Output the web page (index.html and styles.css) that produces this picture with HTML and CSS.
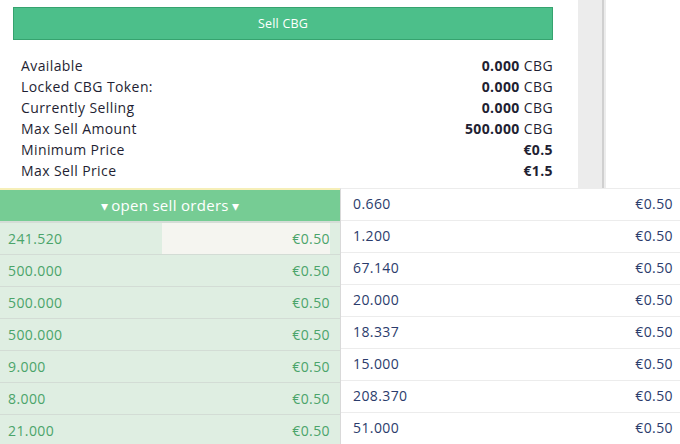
FILE: index.html
```html
<!DOCTYPE html>
<html>
<head>
<meta charset="utf-8">
<link rel="stylesheet" href="styles.css">
</head>
<body>
<div class="top">
  <div class="card">
    <div class="btn">Sell CBG</div>
    <div class="info">
      <div class="irow"><span>Available</span><span><b>0.000</b> CBG</span></div>
      <div class="irow"><span>Locked CBG Token:</span><span><b>0.000</b> CBG</span></div>
      <div class="irow"><span>Currently Selling</span><span><b>0.000</b> CBG</span></div>
      <div class="irow"><span>Max Sell Amount</span><span><b>500.000</b> CBG</span></div>
      <div class="irow"><span>Minimum Price</span><span><b>€0.5</b></span></div>
      <div class="irow"><span>Max Sell Price</span><span><b>€1.5</b></span></div>
    </div>
  </div>
  <div class="scroll"></div>
  <div class="rest"></div>
</div>
<div class="bottom">
  <div class="left">
    <div class="head"><span class="caret">▾</span> open sell orders <span class="caret">▾</span></div>
    <div class="lrow mine"><div class="bar" style="width:168px"></div><span class="amt">241.520</span><span class="pr">€0.50</span></div>
    <div class="lrow"><span class="amt">500.000</span><span class="pr">€0.50</span></div>
    <div class="lrow"><span class="amt">500.000</span><span class="pr">€0.50</span></div>
    <div class="lrow"><span class="amt">500.000</span><span class="pr">€0.50</span></div>
    <div class="lrow"><span class="amt">9.000</span><span class="pr">€0.50</span></div>
    <div class="lrow"><span class="amt">8.000</span><span class="pr">€0.50</span></div>
    <div class="lrow"><span class="amt">21.000</span><span class="pr">€0.50</span></div>
  </div>
  <div class="right">
    <div class="rrow"><span>0.660</span><span>€0.50</span></div>
    <div class="rrow"><span>1.200</span><span>€0.50</span></div>
    <div class="rrow"><span>67.140</span><span>€0.50</span></div>
    <div class="rrow"><span>20.000</span><span>€0.50</span></div>
    <div class="rrow"><span>18.337</span><span>€0.50</span></div>
    <div class="rrow"><span>15.000</span><span>€0.50</span></div>
    <div class="rrow"><span>208.370</span><span>€0.50</span></div>
    <div class="rrow"><span>51.000</span><span>€0.50</span></div>
  </div>
</div>
</body>
</html>
```
FILE: styles.css
```css
html, body {
  margin: 0;
  padding: 0;
  background: #fff;
  overflow: hidden;
}
body {
  font-family: "Open Sans", "Noto Sans", sans-serif;
  font-size: 13px;
  color: #1f1f33;
  width: 680px;
  height: 444px;
}
.top {
  display: flex;
  height: 188px;
}
.card {
  width: 540px;
  padding: 7px 25px 0 13px;
}
.btn {
  height: 31px;
  background: #4cbf8a;
  border: 1px solid #36a36f;
  color: #fff;
  display: flex;
  align-items: center;
  justify-content: center;
  font-size: 12.5px;
  letter-spacing: 0.2px;
}
.info {
  margin-top: 15px;
  padding-left: 8px;
}
.irow {
  display: flex;
  justify-content: space-between;
  height: 21px;
  line-height: 21px;
  font-size: 14px;
  letter-spacing: 0.4px;
}
.irow b {
  font-weight: 700;
}
.scroll {
  width: 24px;
  background: #ececec;
  border-right: 2px solid #d0d0d0;
  box-shadow: 2px 0 0 #ececec;
}
.rest {
  flex: 1;
}
.bottom {
  display: flex;
}
.left {
  width: 340px;
  border-top: 2px solid #f6efb8;
  background: #dfeee2;
}
.head {
  height: 30px;
  padding-bottom: 1px;
  background: #76cc94;
  color: #fff;
  display: flex;
  align-items: center;
  justify-content: center;
  font-size: 15px;
  letter-spacing: 0.3px;
  border-bottom: 2px solid #d5ddd7;
  gap: 3px;
}
.caret {
  font-size: 14px;
}
.lrow {
  position: relative;
  height: 31px;
  border-bottom: 1px solid #d3dcd5;
  display: flex;
  align-items: center;
  justify-content: space-between;
  padding: 0 10px 0 8px;
  color: #4ba46a;
  font-size: 14px;
  letter-spacing: 0.4px;
}
.lrow span {
  position: relative;
}
.bar {
  position: absolute;
  top: 0;
  bottom: 0;
  right: 10px;
  background: #f5f5f0;
}
.right {
  flex: 1;
  border-left: 1px solid #d9d9d9;
  border-top: 1px solid #ececec;
}
.rrow {
  height: 29px;
  padding-bottom: 2px;
  border-bottom: 1px solid #ececec;
  display: flex;
  align-items: center;
  justify-content: space-between;
  padding-left: 12px;
  padding-right: 7px;
  color: #2b3c6c;
  font-size: 14px;
  letter-spacing: 0.4px;
}
```
